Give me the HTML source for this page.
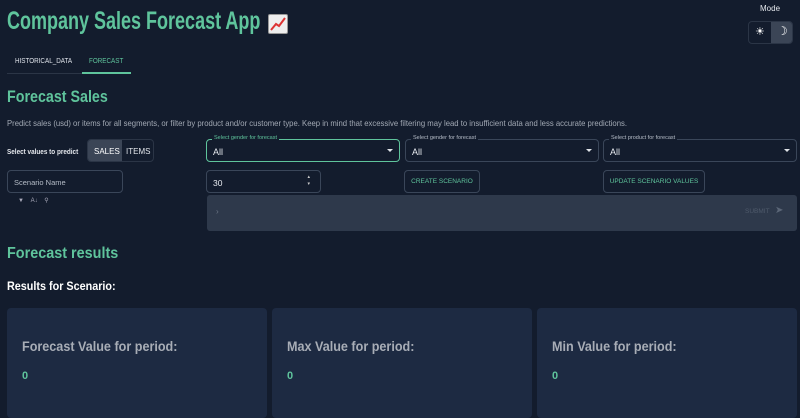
<!DOCTYPE html>
<html><head><style>
*{margin:0;padding:0;box-sizing:border-box}
body{width:800px;height:413px;overflow:hidden;background:#131c2d;font-family:"Liberation Sans",sans-serif;position:relative;color:#dfe3ea}
.a{position:absolute;white-space:nowrap;transform-origin:left top}
.g{color:#5fc49c}
.sel{position:absolute;height:23px;border:1px solid #3a4659;border-radius:4px}
.sel .l{position:absolute;top:-5px;left:5px;font-size:5.5px;background:#131c2d;padding:0 2px;color:#b6bdc8}
.sel .v{position:absolute;left:6px;top:7px;font-size:9px;color:#e8ebf0}
.sel .c{position:absolute;right:6px;top:9px;border-left:3px solid transparent;border-right:3px solid transparent;border-top:3px solid #e0e3e8}
.btn{position:absolute;height:23px;border:1px solid #3a4659;border-radius:4px;color:#5fc49c;font-size:6.5px;display:flex;align-items:center;justify-content:center}
.card{position:absolute;top:308px;width:260px;height:110px;background:#1d2a42;border-radius:4px}
.card .t{position:absolute;left:15px;top:30px;font-size:14px;font-weight:bold;color:#a8adb6;transform:scaleX(0.9);transform-origin:left top;white-space:nowrap}
.card .n{position:absolute;left:15px;top:62px;font-size:11px;font-weight:bold;color:#5fc49c}
</style></head><body>
<div class="a g" style="left:7px;top:7px;font-size:25px;font-weight:bold;transform:scaleX(0.72)">Company Sales Forecast App</div>
<div class="a" style="left:268px;top:14px;width:20px;height:20px;background:#eee;border:1px solid #999;border-radius:2px">
<svg width="18" height="18" viewBox="0 0 18 18"><path d="M2 15L7 9L10 11L16 3" stroke="#d33" stroke-width="2" fill="none"/></svg></div>
<div class="a" style="left:760px;top:4px;font-size:8px;color:#e4e7ec">Mode</div>
<div class="a" style="left:748px;top:21px;width:45px;height:23px;border:1px solid #2b3546;border-radius:4px;overflow:hidden">
<div class="a" style="left:22px;top:0;width:23px;height:23px;background:#3b4556"></div>
<div class="a" style="left:6px;top:3px;font-size:11px;color:#fff">☀</div>
<div class="a" style="left:28px;top:2px;font-size:12px;color:#fff">☽</div></div>
<div class="a" style="left:15px;top:58px;font-size:7px;color:#dfe3ea;transform:scaleX(0.9)">HISTORICAL_DATA</div>
<div class="a" style="left:89px;top:58px;font-size:7px;color:#5fc49c;transform:scaleX(0.9)">FORECAST</div>
<div class="a" style="left:7px;top:73px;width:124px;height:1px;background:#2b3546"></div>
<div class="a" style="left:82px;top:72px;width:49px;height:2px;background:#5fc49c"></div>
<div class="a g" style="left:7px;top:87px;font-size:17px;font-weight:bold;transform:scaleX(0.84)">Forecast Sales</div>
<div class="a" style="left:7px;top:118px;font-size:8.3px;color:#a2a9b4;transform:scaleX(0.93)">Predict sales (usd) or items for all segments, or filter by product and/or customer type. Keep in mind that excessive filtering may lead to insufficient data and less accurate predictions.</div>
<div class="a" style="left:7px;top:147px;font-size:7.5px;font-weight:bold;color:#e4e7ec;transform:scaleX(0.85)">Select values to predict</div>
<div class="a" style="left:87px;top:139px;width:67px;height:23px;border:1px solid #2b3546;border-radius:4px;overflow:hidden;font-size:8px">
<div class="a" style="left:0;top:0;width:34px;height:23px;background:#3b4556"></div>
<div class="a" style="left:6px;top:7px;color:#fff">SALES</div><div class="a" style="left:38px;top:7px;color:#e4e7ec">ITEMS</div></div>
<div class="sel" style="left:206px;top:139px;width:194px;border-color:#5fc49c"><span class="l" style="color:#5fc49c">Select gender for forecast</span><span class="v">All</span><span class="c"></span></div>
<div class="sel" style="left:405px;top:139px;width:194px"><span class="l">Select gender for forecast</span><span class="v">All</span><span class="c"></span></div>
<div class="sel" style="left:603px;top:139px;width:194px"><span class="l">Select product for forecast</span><span class="v">All</span><span class="c"></span></div>
<div class="sel" style="left:7px;top:170px;width:116px"><span class="v" style="font-size:7.5px;color:#b6bdc8">Scenario Name</span></div>
<div class="a" style="left:18px;top:197px;font-size:6px;color:#aab">▼&nbsp;&nbsp;&nbsp;&nbsp;A↓&nbsp;&nbsp;&nbsp;&nbsp;⚲</div>
<div class="sel" style="left:206px;top:170px;width:115px"><span class="v" style="font-size:8.5px">30</span><span class="a" style="right:10px;left:auto;top:3px;font-size:5px;line-height:7px;color:#ccc">▴<br>▾</span></div>
<div class="btn" style="left:404px;top:170px;width:76px">CREATE SCENARIO</div>
<div class="btn" style="left:603px;top:170px;width:102px">UPDATE SCENARIO VALUES</div>
<div class="a" style="left:207px;top:195px;width:590px;height:36px;background:#2e394b;border-radius:3px">
<div class="a" style="left:9px;top:12px;font-size:8px;color:#6b7585">›</div>
<div class="a" style="left:538px;top:13px;font-size:6.5px;color:#4f5a6b">SUBMIT</div>
<div class="a" style="left:568px;top:10px;font-size:10px;color:#5b6677">➤</div></div>
<div class="a g" style="left:7px;top:245px;font-size:16px;font-weight:bold;transform:scaleX(0.9)">Forecast results</div>
<div class="a" style="left:7px;top:279px;font-size:12px;font-weight:bold;color:#fff;transform:scaleX(0.9)">Results for Scenario:</div>
<div class="card" style="left:7px"><div class="t">Forecast Value for period:</div><div class="n">0</div></div>
<div class="card" style="left:272px"><div class="t">Max Value for period:</div><div class="n">0</div></div>
<div class="card" style="left:537px"><div class="t">Min Value for period:</div><div class="n">0</div></div>
</body></html>
